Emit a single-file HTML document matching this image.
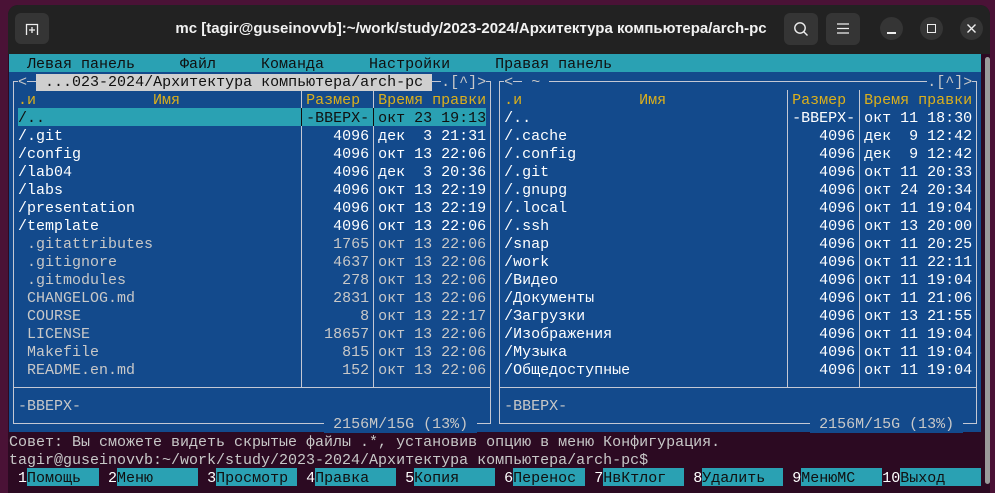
<!DOCTYPE html>
<html><head><meta charset="utf-8"><style>
*{margin:0;padding:0;box-sizing:border-box}
body{width:995px;height:493px;overflow:hidden;background:#4a1236;position:relative;font-family:"Liberation Mono",monospace}
#win{position:absolute;left:8px;top:5px;width:982px;height:488px;background:#2c0a22;border-radius:10px 10px 0 0;overflow:hidden}
#tb{position:absolute;left:0;top:0;width:982px;height:49px;background:#222222}
.btn{position:absolute;background:#353535;border-radius:6px}
.circ{position:absolute;width:23px;height:23px;border-radius:50%;background:#353535}
#title{position:absolute;left:0;width:926px;top:15px;text-align:center;color:#f2f2f2;font:bold 15px "Liberation Sans",sans-serif}
#term{position:absolute;left:9px;top:54px;width:972px;height:432px}
.bg{position:absolute}
.ln{position:absolute;background:#c4c8d4}
pre{position:absolute;left:0;top:2px;font:15px/18px "Liberation Mono","DejaVu Sans Mono",monospace;color:#c8c8c8;white-space:pre}
.y{color:#dcb01c}.w{color:#ffffff}.g{color:#c8c8c8}.k{color:#101010}.b{background:#134a8c}.t{background:#cfcfcf;color:#101010}
#sb{position:absolute;left:985px;top:57px;width:5px;height:427px;background:#9a9a9a;border-radius:3px}
</style></head><body>
<div id="win">
 <div id="tb">
  <div class="btn" style="left:7px;top:8px;width:34px;height:31px"></div>
  <svg style="position:absolute;left:17px;top:17px" width="14" height="14" viewBox="0 0 14 14"><path d="M1.5 13V2.5h11V13M7 5v6M4 8h6" stroke="#eee" stroke-width="1.3" fill="none"/></svg>
  <div id="title">mc [tagir@guseinovvb]:~/work/study/2023-2024/Архитектура компьютера/arch-pc</div>
  <div class="btn" style="left:776px;top:8px;width:34px;height:32px"></div>
  <svg style="position:absolute;left:785px;top:16px" width="16" height="16" viewBox="0 0 16 16"><circle cx="7" cy="7" r="5.2" stroke="#eee" stroke-width="1.4" fill="none"/><path d="M11 11l3.5 3.5" stroke="#eee" stroke-width="1.4"/></svg>
  <div class="btn" style="left:818px;top:8px;width:34px;height:32px"></div>
  <svg style="position:absolute;left:829px;top:18px" width="12" height="11" viewBox="0 0 12 11"><path d="M0 1h12M0 5.5h12M0 10h12" stroke="#eee" stroke-width="1.3"/></svg>
  <div class="circ" style="left:872px;top:12px"></div>
  <div style="position:absolute;left:879px;top:27px;width:9px;height:1.5px;background:#eee"></div>
  <div class="circ" style="left:912px;top:12px"></div>
  <div style="position:absolute;left:919px;top:19px;width:9px;height:9px;border:1.4px solid #eee"></div>
  <div class="circ" style="left:952px;top:12px"></div>
  <svg style="position:absolute;left:959px;top:19px" width="9" height="9" viewBox="0 0 9 9"><path d="M0.5 0.5l8 8M8.5 0.5l-8 8" stroke="#eee" stroke-width="1.4"/></svg>
 </div>
</div>
<div id="sb"></div>
<div id="term">
 <div class="bg" style="left:0;top:0;width:972px;height:18px;background:#2aa1b3"></div>
 <div class="bg" style="left:0;top:18px;width:972px;height:360px;background:#134a8c"></div>
 <div class="bg" style="left:9px;top:54px;width:468px;height:18px;background:#2aa1b3"></div>
 <div class="bg" style="left:18px;top:414px;width:72px;height:18px;background:#2aa1b3"></div>
 <div class="bg" style="left:108px;top:414px;width:81px;height:18px;background:#2aa1b3"></div>
 <div class="bg" style="left:207px;top:414px;width:81px;height:18px;background:#2aa1b3"></div>
 <div class="bg" style="left:306px;top:414px;width:81px;height:18px;background:#2aa1b3"></div>
 <div class="bg" style="left:405px;top:414px;width:81px;height:18px;background:#2aa1b3"></div>
 <div class="bg" style="left:504px;top:414px;width:72px;height:18px;background:#2aa1b3"></div>
 <div class="bg" style="left:594px;top:414px;width:81px;height:18px;background:#2aa1b3"></div>
 <div class="bg" style="left:693px;top:414px;width:81px;height:18px;background:#2aa1b3"></div>
 <div class="bg" style="left:792px;top:414px;width:81px;height:18px;background:#2aa1b3"></div>
 <div class="bg" style="left:891px;top:414px;width:81px;height:18px;background:#2aa1b3"></div>
 <div class="ln" style="left:4px;top:27px;width:478px;height:1px"></div>
 <div class="ln" style="left:4px;top:369px;width:478px;height:1px"></div>
 <div class="ln" style="left:4px;top:27px;width:1px;height:343px"></div>
 <div class="ln" style="left:481px;top:27px;width:1px;height:343px"></div>
 <div class="ln" style="left:4px;top:333px;width:478px;height:1px"></div>
 <div class="ln" style="left:292px;top:36px;width:1px;height:297px"></div>
 <div class="ln" style="left:364px;top:36px;width:1px;height:297px"></div>
 <div class="bg" style="left:292px;top:54px;width:1px;height:18px;background:#101010"></div>
 <div class="bg" style="left:364px;top:54px;width:1px;height:18px;background:#101010"></div>
 <div class="ln" style="left:490px;top:27px;width:478px;height:1px"></div>
 <div class="ln" style="left:490px;top:369px;width:478px;height:1px"></div>
 <div class="ln" style="left:490px;top:27px;width:1px;height:343px"></div>
 <div class="ln" style="left:967px;top:27px;width:1px;height:343px"></div>
 <div class="ln" style="left:490px;top:333px;width:478px;height:1px"></div>
 <div class="ln" style="left:778px;top:36px;width:1px;height:297px"></div>
 <div class="ln" style="left:850px;top:36px;width:1px;height:297px"></div>
<pre><span class="k">  Левая панель     Файл     Команда     Настройки     Правая панель</span>
 <span class="b">&lt;</span> <span class="t"> ...023-2024/Архитектура компьютера/arch-pc </span> <span class="b">.[^]&gt;</span>  <span class="b">&lt;</span> <span class="b"> ~ </span>                                          <span class="b">.[^]&gt;</span>
 <span class="y">.и             Имя              Размер  Время правки</span>  <span class="y">.и             Имя              Размер  Время правки</span>
 <span class="k">/..                             -ВВЕРХ- окт 23 19:13</span>  <span class="w">/..                             -ВВЕРХ- окт 11 18:30</span>
 <span class="w">/.git                              4096 дек  3 21:31</span>  <span class="w">/.cache                            4096 дек  9 12:42</span>
 <span class="w">/config                            4096 окт 13 22:06</span>  <span class="w">/.config                           4096 дек  9 12:42</span>
 <span class="w">/lab04                             4096 дек  3 20:36</span>  <span class="w">/.git                              4096 окт 11 20:33</span>
 <span class="w">/labs                              4096 окт 13 22:19</span>  <span class="w">/.gnupg                            4096 окт 24 20:34</span>
 <span class="w">/presentation                      4096 окт 13 22:19</span>  <span class="w">/.local                            4096 окт 11 19:04</span>
 <span class="w">/template                          4096 окт 13 22:06</span>  <span class="w">/.ssh                              4096 окт 13 20:00</span>
 <span class="g"> .gitattributes                    1765 окт 13 22:06</span>  <span class="w">/snap                              4096 окт 11 20:25</span>
 <span class="g"> .gitignore                        4637 окт 13 22:06</span>  <span class="w">/work                              4096 окт 11 22:11</span>
 <span class="g"> .gitmodules                        278 окт 13 22:06</span>  <span class="w">/Видео                             4096 окт 11 19:04</span>
 <span class="g"> CHANGELOG.md                      2831 окт 13 22:06</span>  <span class="w">/Документы                         4096 окт 11 21:06</span>
 <span class="g"> COURSE                               8 окт 13 22:17</span>  <span class="w">/Загрузки                          4096 окт 13 21:55</span>
 <span class="g"> LICENSE                          18657 окт 13 22:06</span>  <span class="w">/Изображения                       4096 окт 11 19:04</span>
 <span class="g"> Makefile                           815 окт 13 22:06</span>  <span class="w">/Музыка                            4096 окт 11 19:04</span>
 <span class="g"> README.en.md                       152 окт 13 22:06</span>  <span class="w">/Общедоступные                     4096 окт 11 19:04</span>

 -ВВЕРХ-                                               -ВВЕРХ-
                                   <span class="b"> 2156M/15G (13%) </span>                                     <span class="b"> 2156M/15G (13%) </span>
Совет: Вы сможете видеть скрытые файлы .*, установив опцию в меню Конфигурация.
tagir@guseinovvb:~/work/study/2023-2024/Архитектура компьютера/arch-pc$
<span class="w"> 1</span><span class="k">Помощь  </span><span class="w"> 2</span><span class="k">Меню     </span><span class="w"> 3</span><span class="k">Просмотр </span><span class="w"> 4</span><span class="k">Правка   </span><span class="w"> 5</span><span class="k">Копия    </span><span class="w"> 6</span><span class="k">Перенос </span><span class="w"> 7</span><span class="k">НвКтлог  </span><span class="w"> 8</span><span class="k">Удалить  </span><span class="w"> 9</span><span class="k">МенюМС   </span><span class="w">10</span><span class="k">Выход</span></pre>
</div>
</body></html>
